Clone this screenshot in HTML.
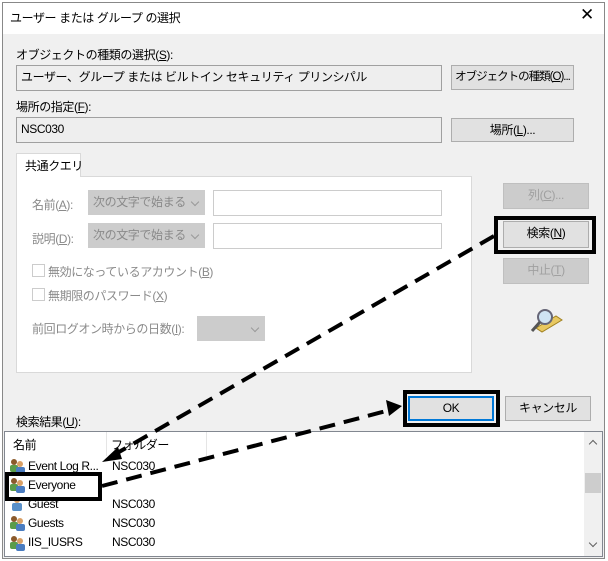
<!DOCTYPE html>
<html><head><meta charset="utf-8"><style>
*{box-sizing:border-box;margin:0;padding:0}
body{width:608px;height:561px;background:#fff;font-family:"Liberation Sans","Noto Sans CJK JP",sans-serif;font-size:12px;color:#000;position:relative;overflow:hidden;letter-spacing:-0.4px}
.a{position:absolute;white-space:nowrap}
.dlg{position:absolute;left:2px;top:2px;width:603px;height:557px;border:1px solid #888;background:#f0f0f0}
.title{position:absolute;left:0;top:0;width:601px;height:31px;background:#fff}
.tb{position:absolute;background:#eeeeee;border:1px solid #a0a0a0;padding:3px 4px;line-height:16px;white-space:nowrap}
.btn{position:absolute;background:#e1e1e1;border:1px solid #adadad;text-align:center;line-height:22px;white-space:nowrap}
.dis{color:#a0a0a0;background:#ccc;border-color:#bfbfbf}
.gray{color:#8a8a8a}
.combo{position:absolute;background:#ccc;border:1px solid #ccc;color:#8a8a8a;padding-left:4px;line-height:23px;white-space:nowrap}
.combo i{position:absolute;right:6px;top:8px;width:6px;height:6px;border-right:1px solid #999;border-bottom:1px solid #999;transform:rotate(45deg)}
.inp{position:absolute;background:#fff;border:1px solid #ccc}
.cb{position:absolute;width:13px;height:13px;border:1px solid #ccc;background:#fff}
.row{position:absolute;left:28px;font-size:12px}
u{text-decoration:underline}
</style></head><body>
<div class="dlg">
<div class="title"></div>
</div>
<div class="a" style="left:10px;top:9px;font-size:12px">ユーザー または グループ の選択</div>
<div class="a" style="left:580px;top:5px;font-size:17px;font-weight:300">✕</div>

<div class="a" style="left:16px;top:46px">オブジェクトの種類の選択(<u>S</u>):</div>
<div class="tb" style="left:16px;top:65px;width:426px;height:26px">ユーザー、グループ または ビルトイン セキュリティ プリンシパル</div>
<div class="btn" style="left:451px;top:65px;width:123px;height:25px;letter-spacing:-1px;font-size:11.5px">オブジェクトの種類(<u>O</u>)...</div>

<div class="a" style="left:16px;top:98px">場所の指定(<u>F</u>):</div>
<div class="tb" style="left:16px;top:117px;width:426px;height:26px">NSC030</div>
<div class="btn" style="left:451px;top:118px;width:123px;height:24px">場所(<u>L</u>)...</div>

<div class="a" style="left:16px;top:153px;width:65px;height:24px;background:#fff;border:1px solid #d9d9d9;border-bottom:none;padding:3px 0 0 8px;z-index:2">共通クエリ</div>
<div class="a" style="left:16px;top:176px;width:456px;height:197px;background:#fff;border:1px solid #d9d9d9"></div>

<div class="a gray" style="left:32px;top:196px">名前(<u>A</u>):</div>
<div class="combo" style="left:88px;top:190px;width:117px;height:25px">次の文字で始まる<i></i></div>
<div class="inp" style="left:213px;top:190px;width:229px;height:26px"></div>
<div class="a gray" style="left:32px;top:230px">説明(<u>D</u>):</div>
<div class="combo" style="left:88px;top:223px;width:117px;height:25px">次の文字で始まる<i></i></div>
<div class="inp" style="left:213px;top:223px;width:229px;height:26px"></div>
<div class="cb" style="left:32px;top:264px"></div>
<div class="a gray" style="left:48px;top:263px">無効になっているアカウント(<u>B</u>)</div>
<div class="cb" style="left:32px;top:288px"></div>
<div class="a gray" style="left:48px;top:287px">無期限のパスワード(<u>X</u>)</div>
<div class="a gray" style="left:32px;top:320px">前回ログオン時からの日数(<u>I</u>):</div>
<div class="combo" style="left:197px;top:316px;width:68px;height:25px"><i></i></div>

<div class="btn dis" style="left:503px;top:183px;width:86px;height:26px">列(<u>C</u>)...</div>
<div class="a" style="left:494px;top:216px;width:102px;height:38px;border:4px solid #000"></div>
<div class="btn" style="left:503px;top:221px;width:86px;height:27px">検索(<u>N</u>)</div>
<div class="btn dis" style="left:503px;top:258px;width:86px;height:26px">中止(<u>T</u>)</div>
<svg class="a" style="left:528px;top:306px" width="36" height="30" viewBox="0 0 36 30">
<polygon points="8,22 28,10 34,14 14,26" fill="#e8c860" stroke="#a08020"/>
<circle cx="17" cy="11" r="7" fill="#cfe4f4" stroke="#667" stroke-width="2"/>
<line x1="12" y1="16" x2="4" y2="25" stroke="#555" stroke-width="3"/>
</svg>

<div class="a" style="left:16px;top:413px">検索結果(<u>U</u>):</div>
<div class="a" style="left:403px;top:390px;width:97px;height:37px;border:4px solid #000"></div>
<div class="btn" style="left:408px;top:396px;width:86px;height:25px;border:2px solid #0078d7;line-height:21px">OK</div>
<div class="btn" style="left:505px;top:396px;width:86px;height:25px">キャンセル</div>

<div class="a" style="left:4px;top:431px;width:599px;height:126px;background:#fff;border:1px solid #828790"></div>
<div class="a" style="left:13px;top:436px">名前</div>
<div class="a" style="left:111px;top:436px">フォルダー</div>
<div class="a" style="left:106px;top:432px;width:1px;height:24px;background:#e5e5e5"></div>
<div class="a" style="left:206px;top:432px;width:1px;height:24px;background:#e5e5e5"></div>
<div class="a" style="left:584px;top:432px;width:18px;height:124px;background:#f0f0f0"></div>
<div class="a" style="left:585px;top:473px;width:16px;height:20px;background:#cdcdcd"></div>
<div class="a" style="left:590px;top:441px;width:6px;height:6px;border-left:1px solid #606060;border-top:1px solid #606060;transform:rotate(45deg)"></div>
<div class="a" style="left:590px;top:540px;width:6px;height:6px;border-right:1px solid #606060;border-bottom:1px solid #606060;transform:rotate(45deg)"></div>

<svg class="a" style="left:0;top:0" width="608" height="561">
<defs><g id="g"><circle cx="5" cy="4" r="3" fill="#8b5a2b"/><rect x="1" y="7" width="8" height="7" rx="2" fill="#5a9c4a"/><circle cx="11" cy="6" r="3" fill="#d9a066"/><rect x="7" y="9" width="9" height="7" rx="2" fill="#4a7cc0"/></g></defs>
<use href="#g" x="9" y="458"/><use href="#g" x="9" y="477"/><use href="#g" x="9" y="515"/><use href="#g" x="9" y="535"/>
<circle cx="17" cy="500" r="3" fill="#d9a066"/><rect x="12" y="503" width="10" height="8" rx="2" fill="#5a90c8"/>
</svg>
<div class="row" style="top:459px">Event Log R...</div>
<div class="row" style="top:478px">Everyone</div>
<div class="row" style="top:497px">Guest</div>
<div class="row" style="top:516px">Guests</div>
<div class="row" style="top:535px">IIS_IUSRS</div>
<div class="a" style="left:112px;top:459px">NSC030</div>
<div class="a" style="left:112px;top:497px">NSC030</div>
<div class="a" style="left:112px;top:516px">NSC030</div>
<div class="a" style="left:112px;top:535px">NSC030</div>
<div class="a" style="left:5px;top:472px;width:97px;height:29px;border:4px solid #000"></div>

<svg class="a" style="left:0;top:0" width="608" height="561">
<line x1="494" y1="236" x2="112" y2="456" stroke="#000" stroke-width="4" stroke-dasharray="16,9"/>
<polygon points="102,462 118,447 122,459" fill="#000"/>
<line x1="102" y1="486" x2="390" y2="410" stroke="#000" stroke-width="4" stroke-dasharray="16,9"/>
<polygon points="402,406 386,400 389,416" fill="#000"/>
</svg>
</body></html>
